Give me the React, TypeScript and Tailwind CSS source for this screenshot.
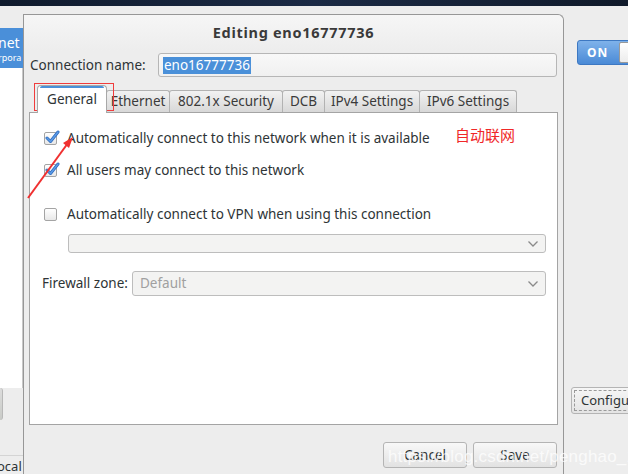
import React from 'react';

const font = { fontFamily: '"Noto Sans", "DejaVu Sans", sans-serif' };

const Check = ({ on }: { on?: boolean }) => (
  <div className="relative w-[13px] h-[13px] rounded-[2px] border border-[#a4a4a4] bg-gradient-to-b from-white to-[#e8e8e8] shrink-0">
    {on && (
      <svg className="absolute -top-[3px] left-0" width="15" height="14" viewBox="0 0 15 14">
        <path d="M2 8 L5.5 11.5 L13 2" fill="none" stroke="#2f6cbf" strokeWidth="3" strokeLinecap="round" strokeLinejoin="round" />
        <path d="M2 8 L5.5 11.5 L13 2" fill="none" stroke="#5b9be6" strokeWidth="1.4" strokeLinecap="round" strokeLinejoin="round" />
      </svg>
    )}
  </div>
);

const Chevron = () => (
  <svg width="12" height="8" viewBox="0 0 12 8">
    <path d="M1.5 1.5 L6 6 L10.5 1.5" fill="none" stroke="#8a8a8a" strokeWidth="1.3" />
  </svg>
);

const tabs = [
  { t: 'Ethernet', w: 'w-[64px]' },
  { t: '802.1x Security', w: 'w-[114px]' },
  { t: 'DCB', w: 'w-[43px]' },
  { t: 'IPv4 Settings', w: 'w-[96px]' },
  { t: 'IPv6 Settings', w: 'w-[98px]' },
];

export default function App() {
  return (
    <div className="relative w-[628px] h-[474px] overflow-hidden bg-[#ededed] flex flex-col text-[#2e3436]" style={font}>
      <div className="h-[6px] bg-gradient-to-r from-[#0f1a2c] via-[#1b2a45] to-[#101a2a] shrink-0" />
      <div className="flex flex-1">
        {/* left list behind dialog */}
        <div className="w-[23px] shrink-0 flex flex-col overflow-hidden">
          <div className="h-[22px]" />
          <div className="h-[40px] bg-[#4a8fd9] text-white flex flex-col justify-center">
            <span className="text-[14px] leading-[18px] -ml-[2px] whitespace-nowrap">net</span>
            <span className="text-[9px] leading-[11px] -ml-[2px] whitespace-nowrap">rpora</span>
          </div>
          <div className="h-[320px] bg-white border-r border-[#c8c8c8]" />
          <div className="h-[32px] bg-gradient-to-b from-[#dcdcdc] to-[#c9cbc7] rounded-r-[3px] border-r border-[#b8b8b8] mr-[20px]" />
          <div className="h-[36px] border-b border-[#d4d4d4]" />
          <div className="text-[13px] leading-[16px] pt-[2px] -ml-[3px] whitespace-nowrap">ocal</div>
        </div>

        {/* dialog */}
        <div className="mt-[8px] w-[541px] shrink-0 border-l border-r border-t border-[#979797] rounded-tr-[6px] bg-[#ededed] flex flex-col">
          <div className="h-[36px] flex items-center justify-center text-[14.5px] font-bold tracking-[0.7px] text-[#3a3a3a] bg-gradient-to-b from-[#f6f6f6] to-[#ededed] rounded-tr-[6px]">
            Editing eno16777736
          </div>
          <div className="flex items-center h-[24px] pl-[6px] pr-[6px] mt-[2px]">
            <span className="text-[13.5px] w-[128px]">Connection name:</span>
            <div className="flex-1 h-[24px] rounded-[3px] border border-[#b6b6b6] bg-gradient-to-b from-[#f8f8f8] to-[#f0f0f0] flex items-center pl-[4px]">
              <span className="bg-[#4a90d9] text-white text-[13.5px] leading-[17px] px-[1px]">eno16777736</span>
            </div>
          </div>

          {/* tabs */}
          <div className="flex items-end h-[35px] pl-[13px]">
            <div className="relative h-[28px] w-[70px] bg-white border border-[#a8a8a8] border-b-0 rounded-t-[4px] flex items-center justify-center text-[13.5px] z-10 -mb-px">
              <div className="absolute top-0 left-[2px] right-[2px] h-[2px] bg-[#4a90d9] rounded-t-[3px]" />
              General
            </div>
            {tabs.map(({ t, w }) => (
              <div
                key={t}
                className={`${w} h-[22px] shrink-0 bg-gradient-to-b from-[#f2f2f2] to-[#d8d8d8] border border-[#b2b2b2] border-b-0 rounded-t-[3px] flex items-center justify-center text-[13.5px] text-[#3a3a3a] -ml-px first:ml-[3px]`}
              >
                {t}
              </div>
            ))}
          </div>

          {/* content panel */}
          <div className="mx-[5px] h-[313px] bg-white border border-[#a4a4a4] flex flex-col pl-[14px] pr-[11px] text-[13.5px]">
            <div className="flex items-center gap-[10px] mt-[17px] h-[16px]">
              <Check on />
              <span>Automatically connect to this network when it is available</span>
            </div>
            <div className="flex items-center gap-[10px] mt-[16px] h-[16px]">
              <Check on />
              <span>All users may connect to this network</span>
            </div>
            <div className="flex items-center gap-[10px] mt-[28px] h-[16px]">
              <Check />
              <span>Automatically connect to VPN when using this connection</span>
            </div>
            <div className="ml-[24px] mt-[12px] h-[19px] rounded-[3px] border border-[#bdbdbd] bg-[#f3f3f2] flex items-center justify-end pr-[6px]">
              <Chevron />
            </div>
            <div className="flex items-center mt-[18px] -ml-[2px]">
              <span className="w-[90px]">Firewall zone:</span>
              <div className="flex-1 h-[25px] rounded-[3px] border border-[#bdbdbd] bg-[#f3f3f2] flex items-center justify-between pl-[7px] pr-[6px] text-[#a0a0a0]">
                <span>Default</span>
                <Chevron />
              </div>
            </div>
          </div>

          {/* buttons */}
          <div className="flex justify-end gap-[6px] mt-[17px] pr-[6px]">
            <div className="w-[84px] h-[26px] rounded-[3px] border border-[#b4b4b4] bg-gradient-to-b from-[#f8f8f8] to-[#e2e2e2] flex items-center justify-center text-[13.5px]">Cancel</div>
            <div className="w-[84px] h-[26px] rounded-[3px] border border-[#b4b4b4] bg-gradient-to-b from-[#f8f8f8] to-[#e2e2e2] flex items-center justify-center text-[13.5px]">Save</div>
          </div>
        </div>

        {/* right side */}
        <div className="flex-1 flex flex-col pl-[13px]">
          <div className="mt-[34px] h-[25px] rounded-l-[3px] bg-gradient-to-b from-[#7fb2ea] to-[#4a8ad6] border border-[#3d78c2] flex items-center pl-[9px] text-white text-[12px] font-bold tracking-[1px]">
            ON
            <div className="ml-[11px] flex-1 h-[21px] bg-gradient-to-b from-white to-[#ececec] border border-[#999] rounded-l-[2px]" />
          </div>
          <div className="mt-[322px] -ml-[6px] h-[27px] rounded-l-[3px] border border-[#b4b4b4] bg-gradient-to-b from-[#f6f6f6] to-[#e4e4e4] p-[2px]">
            <div className="h-full border border-dashed border-[#9a9a9a] border-r-0 flex items-center pl-[6px] text-[13px] whitespace-nowrap overflow-hidden">Configure</div>
          </div>
        </div>
      </div>

      {/* annotations */}
      <div className="absolute left-[34px] top-[83px] w-[80px] h-[28px] border border-[#f03c3c]" />
      <div className="absolute left-[455px] top-[124px] text-[15px] text-[#f02828]" style={{ fontFamily: '"Noto Sans CJK SC", sans-serif' }}>自动联网</div>
      <svg className="absolute left-0 top-0" width="628" height="474">
        <line x1="28" y1="198" x2="68" y2="143" stroke="#f03030" strokeWidth="2" />
        <polygon points="73,137 63,143 69,148" fill="#f03030" />
      </svg>
      <div className="absolute left-[388px] top-[444px] text-[17px] text-white/75 tracking-[0.2px]" style={{ fontFamily: '"Liberation Sans", sans-serif' }}>https://blog.csdn.net/penghao_1</div>
    </div>
  );
}
